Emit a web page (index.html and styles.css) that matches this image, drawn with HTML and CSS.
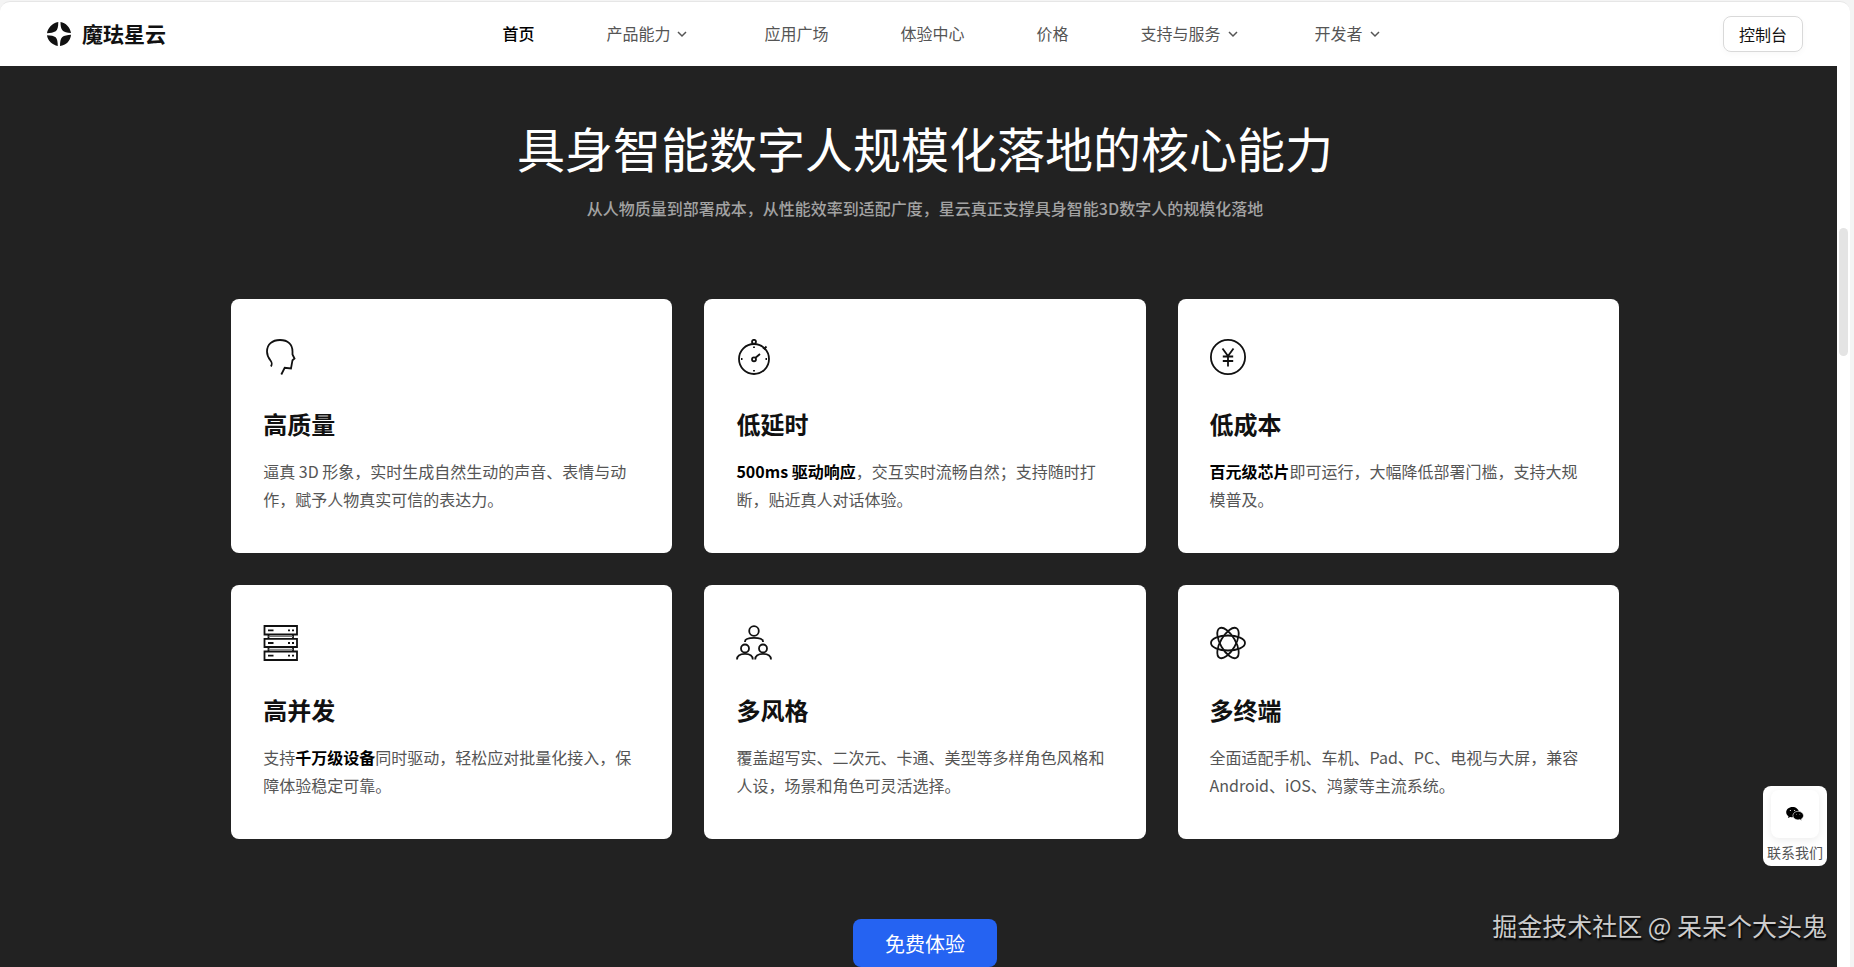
FILE: index.html
```html
<!DOCTYPE html>
<html lang="zh-CN">
<head>
    <meta charset="UTF-8">
    <meta name="viewport" content="width=device-width, initial-scale=1.0">
    <title>魔珐星云</title>
    <link rel="stylesheet" href="styles.css">
</head>
<body>
    <div class="page">
        <header class="header">
            <a class="logo" href="#">
                <svg width="24" height="24" viewBox="0 0 24 24" fill="#111">
                    <path d="M11.300 0C11.300 5 10.500 8 8.700 9.200C6.500 10.600 3.500 10.900 0 11.300C0.500 6.500 5 1 11.300 0Z"/>
                    <path d="M13.500 0C18.700 0.900 23.200 5.300 24 11C20 10.700 17 9.900 15.600 8.500C14 7 13.500 4 13.500 0Z"/>
                    <path d="M0 13.200C4 13.400 7 13.900 8.600 15.300C10.300 17 10.700 20 10.800 24C5.200 22.800 0.600 18.500 0 13.200Z"/>
                    <path d="M24 12.700C23.500 18.700 19 23.300 13 24C13 19.500 13.500 16.500 15.300 14.900C17.200 13.500 20.500 13 24 12.700Z"/>
                </svg>
                <span>魔珐星云</span>
            </a>
            <nav class="nav">
                <a class="active" href="#">首页</a>
                <a href="#">产品能力<svg class="arrow" viewBox="0 0 16 16"><path d="M4 7l4 4 4-4"/></svg></a>
                <a href="#">应用广场</a>
                <a href="#">体验中心</a>
                <a href="#">价格</a>
                <a href="#">支持与服务<svg class="arrow" viewBox="0 0 16 16"><path d="M4 7l4 4 4-4"/></svg></a>
                <a href="#">开发者<svg class="arrow" viewBox="0 0 16 16"><path d="M4 7l4 4 4-4"/></svg></a>
            </nav>
            <button class="console-btn" type="button">控制台</button>
        </header>

        <main class="features">
            <h1>具身智能数字人规模化落地的核心能力</h1>
            <p class="subtitle">从人物质量到部署成本，从性能效率到适配广度，星云真正支撑具身智能3D数字人的规模化落地</p>

            <div class="card-grid">
                <div class="card">
                    <svg class="icon" viewBox="0 0 36 36">
                        <path d="M8 27.500C9.500 24.500 9 23.500 7.500 21.500C5.500 19 4 16 4 12.500C4 5.500 9 1 17 1C25 1 29.500 5.500 29.500 12.500V15.500L31.500 19.500L29.500 21.200L28 29.500L21.700 28.800L18.300 35.500"/>
                    </svg>
                    <h2>高质量</h2>
                    <p>逼真 3D 形象，实时生成自然生动的声音、表情与动作，赋予人物真实可信的表达力。</p>
                </div>
                <div class="card">
                    <svg class="icon" viewBox="0 0 36 36">
                        <circle cx="18" cy="20" r="15"/>
                        <circle cx="18" cy="2.800" r="2"/>
                        <circle cx="18" cy="20.300" r="2"/>
                        <path d="M19.500 18.800L24 15M27 8.500L29.500 10.500M28.500 9.500L30.500 7.500M18 7.500V9M18 31V32.500M5 20H6.500M29.500 20H31"/>
                    </svg>
                    <h2>低延时</h2>
                    <p><strong>500ms 驱动响应</strong>，交互实时流畅自然；支持随时打断，贴近真人对话体验。</p>
                </div>
                <div class="card">
                    <svg class="icon" viewBox="0 0 36 36">
                        <circle cx="18" cy="18" r="17.100"/>
                        <path d="M12.500 9.500L18 17L23.500 9.500M18 17V27.500M12.800 17.500H23.200M12.800 22H23.200"/>
                    </svg>
                    <h2>低成本</h2>
                    <p><strong>百元级芯片</strong>即可运行，大幅降低部署门槛，支持大规模普及。</p>
                </div>
                <div class="card">
                    <svg class="icon" viewBox="0 0 36 36">
                        <path d="M1.500 1H34V9.500H1.500ZM1.500 13.800H34V22H1.500ZM1.500 26.500H34V35H1.500Z"/>
                        <path d="M5.500 9.500V13.500M30 9.500V13.500M5.500 22V26.500M30 22V26.500"/>
                        <path class="thin" d="M5.500 11.500H30M5.500 24.300H30"/>
                        <path d="M5 5.300H10.500M5 18H10.500M5 30.700H10.500M25 5.300H27M29 5.300H31M25 18H27M29 18H31M25 30.700H27M29 30.700H31"/>
                    </svg>
                    <h2>高并发</h2>
                    <p>支持<strong>千万级设备</strong>同时驱动，轻松应对批量化接入，保障体验稳定可靠。</p>
                </div>
                <div class="card">
                    <svg class="icon" viewBox="0 0 36 36">
                        <circle cx="18" cy="6" r="4.800"/>
                        <circle cx="9" cy="23.500" r="4"/>
                        <circle cx="27" cy="23.500" r="4"/>
                        <path d="M9 17V16.500Q9 12.800 18 12.800Q27 12.800 27 16.500V17"/>
                        <path d="M1 34.500C1 30.500 4 28.800 9 28.800C14 28.800 16.800 30.500 16.800 34.500M19.200 34.500C19.200 30.500 22 28.800 27 28.800C32 28.800 35 30.500 35 34.500"/>
                    </svg>
                    <h2>多风格</h2>
                    <p>覆盖超写实、二次元、卡通、美型等多样角色风格和人设，场景和角色可灵活选择。</p>
                </div>
                <div class="card">
                    <svg class="icon" viewBox="0 0 36 36">
                        <ellipse cx="18" cy="18" rx="17" ry="7.500"/>
                        <ellipse cx="18" cy="18" rx="17" ry="7.500" transform="rotate(60 18 18)"/>
                        <ellipse cx="18" cy="18" rx="17" ry="7.500" transform="rotate(120 18 18)"/>
                    </svg>
                    <h2>多终端</h2>
                    <p>全面适配手机、车机、Pad、PC、电视与大屏，兼容Android、iOS、鸿蒙等主流系统。</p>
                </div>
            </div>

            <button class="trial-btn" type="button">免费体验</button>
        </main>

        <!-- overlays -->
        <div class="scroll-track"><div class="scroll-thumb"></div></div>
        <a class="contact" href="#">
            <span class="contact-icon">
                <svg width="18" height="14" viewBox="0 0 18 14">
                    <path d="M6.500 0C2.900 0 0.200 2.300 0.200 5.200C0.200 6.900 1.100 8.300 2.500 9.200L1.900 11L4.200 9.900C5 10.200 5.800 10.300 6.600 10.300L13 5C12.600 2.100 9.900 0 6.500 0Z"/>
                    <path stroke="#fff" stroke-width="0.600" d="M12 4.300C9.100 4.300 6.900 6.200 6.900 8.600C6.900 11 9.100 12.900 12 12.900C12.700 12.900 13.300 12.800 13.900 12.600L15.800 13.700L15.400 12C16.700 11.200 17.500 10 17.500 8.600C17.500 6.200 15 4.300 12 4.300Z"/>
                    <g fill="#fff"><circle cx="4.400" cy="3.500" r="0.600"/><circle cx="8.600" cy="3.500" r="0.600"/><circle cx="10.400" cy="7.200" r="0.400"/><circle cx="13.800" cy="7.200" r="0.400"/></g>
                </svg>
            </span>
            <span>联系我们</span>
        </a>
        <div class="watermark">掘金技术社区 @ 呆呆个大头鬼</div>
    </div>
</body>
</html>
```
FILE: styles.css
```css
* {
    margin: 0;
    padding: 0;
    box-sizing: border-box;
}

body {
    font-family: "Noto Sans CJK SC", sans-serif;
    font-size: 16px;
    background-color: #f4f4f4;
    height: 100vh;
    padding: 1px 4px 0 0;
    overflow: hidden;
}

a {
    color: inherit;
    text-decoration: none;
}

button {
    font-family: inherit;
    cursor: pointer;
}

.page {
    position: relative;
    height: 100%;
    background-color: #fff;
    border-top: 1px solid #e6e6e6;
    border-radius: 10px 10px 0 0;
    overflow: hidden;
}

/* Header */
.header {
    display: flex;
    justify-content: space-between;
    align-items: center;
    height: 64px;
    padding: 0 47px;
}

.logo {
    display: flex;
    align-items: center;
    gap: 11px;
    color: #111;
    font-size: 21px;
    font-weight: 700;
    line-height: 24px;
}

.logo span {
    padding-bottom: 2px;
}

.nav {
    display: flex;
    align-items: center;
    gap: 72px;
    padding: 0 2px 2px 0;
    color: #555;
}

.nav a {
    display: flex;
    align-items: center;
    gap: 4px;
}

.nav .active {
    color: #000;
    font-weight: 500;
}

.arrow {
    width: 16px;
    height: 16px;
    margin-right: 2px;
    fill: none;
    stroke: #555;
    stroke-width: 1.5;
}

.console-btn {
    height: 36px;
    padding: 0 15px;
    border: 1px solid #d9d9d9;
    border-radius: 8px;
    background-color: #fff;
    color: #111;
    font-size: 16px;
    box-shadow: 0 2px 6px rgba(0,0,0,0.03);
}

/* Features */
.features {
    min-height: 100%;
    padding: 48px 0;
    background-color: #222;
    text-align: center;
}

.features h1 {
    color: #fff;
    font-size: 48px;
    font-weight: 400;
    line-height: 66px;
}

.subtitle {
    margin: 18px 0 80px;
    color: #a3a3a3;
    font-weight: 500;
    line-height: 21px;
}

.card-grid {
    display: grid;
    grid-template-columns: repeat(3, 1fr);
    gap: 32px;
    width: 75%;
    margin: 0 auto 80px;
    text-align: left;
}

.card {
    padding: 40px 32px;
    border-radius: 8px;
    background-color: #fff;
}

.icon {
    display: block;
    width: 36px;
    height: 36px;
    fill: none;
    stroke: #111;
    stroke-width: 1.8;
}

.icon .thin {
    stroke: #777;
    stroke-width: 1;
}

.card h2 {
    margin: 32px 0 16px;
    color: #111;
    font-size: 24px;
    font-weight: 700;
    line-height: 34px;
}

.card p {
    color: #555;
    line-height: 28px;
}

.card strong {
    color: #000;
    font-weight: 700;
}

.trial-btn {
    height: 48px;
    padding: 0 32px;
    border: none;
    border-radius: 8px;
    background-color: #2563f2;
    color: #fff;
    font-size: 20px;
}

/* Overlays */
.scroll-track {
    position: absolute;
    top: 64px;
    right: 0;
    bottom: 0;
    width: 13px;
    padding: 162px 2px 0;
    background-color: #fff;
}

.scroll-thumb {
    height: 128px;
    border-radius: 5px;
    background-color: #e4e4e4;
}

.contact {
    position: absolute;
    right: 23px;
    bottom: 101px;
    display: flex;
    flex-direction: column;
    align-items: center;
    gap: 4px;
    width: 64px;
    height: 80px;
    padding-top: 4px;
    border-radius: 8px;
    background-color: #fff;
    color: #555;
    font-size: 14px;
    line-height: 20px;
}

.contact-icon {
    display: flex;
    align-items: center;
    justify-content: center;
    width: 48px;
    height: 48px;
    border-radius: 8px;
    background-color: #fff;
    box-shadow: 0 2px 8px rgba(0,0,0,0.08);
}

.watermark {
    position: absolute;
    right: 23px;
    bottom: 24px;
    color: #ccc;
    font-size: 25px;
    line-height: 36px;
    text-shadow: 1px 2px 2px #000;
}
```
